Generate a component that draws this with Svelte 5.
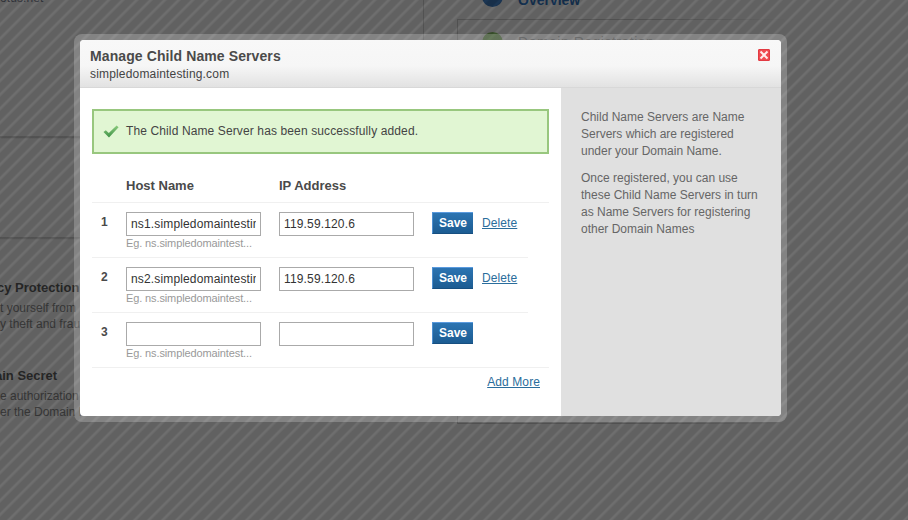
<script>
	const rows = [
		{ n: 1, host: 'ns1.simpledomaintesting.com', ip: '119.59.120.6', saved: true },
		{ n: 2, host: 'ns2.simpledomaintesting.com', ip: '119.59.120.6', saved: true },
		{ n: 3, host: '', ip: '', saved: false }
	];
</script>

<div class="page">
	<!-- the dimmed site behind the overlay -->
	<div class="behind">
		<div class="left-col">
			<p class="domain-bit">otus.net</p>
			<div class="feature first">
				<h4>cy Protection</h4>
				<p>t yourself from<br />y theft and fraud</p>
			</div>
			<div class="feature second">
				<h4>ain Secret</h4>
				<p>e authorization<br />er the Domain N</p>
			</div>
		</div>
		<div class="right-col">
			<div class="overview">
				<span class="dot blue"></span>
				<span class="ov-text">Overview</span>
			</div>
			<div class="panel">
				<span class="dot green"></span>
				<span class="panel-text">Domain Registration</span>
			</div>
		</div>
	</div>
	<div class="stripes"></div>

	<div class="modal">
		<div class="modal-inner">
			<header>
				<h2>Manage Child Name Servers</h2>
				<div class="sub">simpledomaintesting.com</div>
				<button class="close" aria-label="Close">
					<svg width="10" height="10" viewBox="0 0 10 10">
						<path d="M1.5 1.5 8.5 8.5M8.5 1.5 1.5 8.5" stroke="#ffecec" stroke-width="2" fill="none" />
					</svg>
				</button>
			</header>
			<div class="body">
				<div class="main">
					<div class="success">
						<svg width="16" height="13" viewBox="0 0 16 13">
							<defs>
								<linearGradient id="tick" x1="0" y1="0" x2="0" y2="1">
									<stop offset="0" stop-color="#8ccb7e" />
									<stop offset="1" stop-color="#3c9145" />
								</linearGradient>
							</defs>
							<path d="M0.5 7 2.8 5.2 5.8 8 13.6 0.6 15.6 2.2 6 12.6Z" fill="url(#tick)" />
						</svg>
						<span>The Child Name Server has been successfully added.</span>
					</div>
					<div class="heads">
						<span class="h-host">Host Name</span>
						<span>IP Address</span>
					</div>
					{#each rows as row}
						<div class="row">
							<span class="num">{row.n}</span>
							<div class="host">
								<input type="text" value={row.host} />
								<div class="eg">Eg. ns.simpledomaintest...</div>
							</div>
							<input class="ip" type="text" value={row.ip} />
							<button class="save">Save</button>
							{#if row.saved}
								<a href="#delete" class="link">Delete</a>
							{/if}
						</div>
					{/each}
					<div class="more"><a href="#more" class="link">Add More</a></div>
				</div>
				<aside>
					<p>Child Name Servers are Name Servers which are registered under your Domain Name.</p>
					<p>Once registered, you can use these Child Name Servers in turn as Name Servers for registering other Domain Names</p>
				</aside>
			</div>
		</div>
	</div>
</div>

<style>
	:global(body) {
		margin: 0;
	}

	.page {
		position: relative;
		width: 908px;
		height: 520px;
		overflow: hidden;
		font-family: 'Liberation Sans', Arial, sans-serif;
		background: #fff;
	}

	.behind {
		position: absolute;
		inset: 0;
		display: flex;
		align-items: flex-start;
	}

	.left-col {
		position: relative;
		width: 424px;
		height: 400px;
		flex: none;
		box-sizing: border-box;
		border-right: 1px solid #d6d6d6;
		background: linear-gradient(#fff 136px, #ececec 136px, #c4c4c4 137px, #e8e8e8 138px, #fff 139px, #fff 237px, #e4e4e4 237px, #c8c8c8 238px, #ededed 239px, #fff 240px);
	}

	.domain-bit {
		margin: 0;
		position: absolute;
		left: 0;
		top: -9px;
		font-size: 12px;
		color: #7d8294;
		letter-spacing: 0.1px;
	}

	.feature {
		position: absolute;
		left: 0;
		width: 84px;
		overflow: hidden;
		white-space: nowrap;
	}

	.first {
		top: 279px;
	}

	.second {
		top: 367px;
	}

	.feature h4 {
		margin: 0 0 4px -3px;
		font-size: 13px;
		line-height: 17px;
		color: #5e5e5e;
	}

	.second h4 {
		margin-left: -5px;
	}

	.feature p {
		margin: 0;
		font-size: 12px;
		line-height: 16px;
		color: #8a8a8a;
	}

	.right-col {
		flex: 1;
		position: relative;
	}

	.overview {
		position: absolute;
		left: 58px;
		top: -14px;
		display: flex;
		align-items: center;
		gap: 15px;
	}

	.dot {
		display: block;
		flex: none;
		width: 21px;
		height: 21px;
		border-radius: 50%;
	}

	.dot.blue {
		background: #3f7cc0;
	}

	.dot.green {
		background: #8cc66a;
	}

	.ov-text {
		font-size: 14px;
		font-weight: bold;
		color: #2f74c0;
		position: relative;
		top: 3px;
	}

	.panel {
		position: absolute;
		left: 33px;
		top: 19px;
		width: 330px;
		height: 405px;
		box-sizing: border-box;
		border: 1px solid;
		border-right: 0;
		border-image: linear-gradient(to right, #d2d2d2, #d2d2d2 60%, transparent) 1;
		padding: 12px 0 0 24px;
		display: flex;
		gap: 15px;
	}

	.panel-text {
		font-size: 14px;
		line-height: 20px;
		letter-spacing: 0.5px;
		color: #a8a8a8;
	}

	.stripes {
		position: absolute;
		inset: 0;
		background: repeating-linear-gradient(135deg, rgba(0, 0, 0, 0.62) 0 5.5px, rgba(0, 0, 0, 0.57) 7px 8px, rgba(0, 0, 0, 0.62) 9.9px);
	}

	.modal {
		position: absolute;
		left: 74px;
		top: 34px;
		width: 713px;
		height: 388px;
		box-sizing: border-box;
		padding: 6px;
		border-radius: 8px;
		background: rgba(255, 255, 255, 0.22);
	}

	.modal-inner {
		height: 100%;
		border-radius: 4px;
		overflow: hidden;
		display: flex;
		flex-direction: column;
		background: #fff;
		color: #4a4a4a;
	}

	header {
		position: relative;
		flex: none;
		height: 48px;
		box-sizing: border-box;
		padding: 7px 10px;
		background: linear-gradient(#f8f8f8 0, #f6f6f6 55%, #e2e2e2 100%);
		border-bottom: 1px solid #d8d8d8;
	}

	h2 {
		margin: 0;
		font-size: 14px;
		line-height: 18px;
		letter-spacing: 0.1px;
		color: #4a4a4a;
	}

	.sub {
		font-size: 12px;
		line-height: 16px;
		margin-top: 1px;
		letter-spacing: 0.17px;
		color: #444;
	}

	.close {
		position: absolute;
		right: 11px;
		top: 9px;
		width: 12px;
		height: 12px;
		box-sizing: border-box;
		padding: 0;
		border: 1px solid #e23a42;
		border-radius: 1px;
		background: #f04a50;
		display: block;
	}

	.close svg {
		display: block;
	}

	.body {
		flex: 1;
		display: flex;
	}

	.main {
		width: 481px;
		flex: none;
		box-sizing: border-box;
		padding: 21px 12px 0;
	}

	.success {
		height: 45px;
		box-sizing: border-box;
		border: 2px solid #98c77e;
		background: #e1f6d3;
		display: flex;
		align-items: center;
		gap: 7px;
		padding-left: 9px;
		font-size: 12px;
		letter-spacing: 0.12px;
		color: #444;
	}

	.success span {
		position: relative;
		top: -1px;
	}

	.heads {
		display: flex;
		height: 49px;
		align-items: flex-end;
		padding: 0 0 9px 34px;
		box-sizing: border-box;
		font-size: 13px;
		font-weight: bold;
		border-bottom: 1px solid #f0f0f0;
	}

	.h-host {
		width: 153px;
	}

	.row {
		display: flex;
		align-items: flex-start;
		height: 55px;
		box-sizing: border-box;
		padding-top: 9px;
		width: 436px;
		border-bottom: 1px solid #f0f0f0;
		font-size: 12px;
	}

	.row:nth-of-type(5) {
		width: 457px;
	}

	.num {
		width: 34px;
		padding: 3px 0 0 9px;
		box-sizing: border-box;
		font-weight: bold;
	}

	.host {
		width: 153px;
	}

	input {
		display: block;
		width: 135px;
		height: 24px;
		box-sizing: border-box;
		border: 1px solid #aaa;
		padding: 0 4px;
		font: 12px 'Liberation Sans', Arial, sans-serif;
		letter-spacing: 0.15px;
		color: #333;
		background: #fff;
		outline: none;
	}

	.eg {
		font-size: 11px;
		line-height: 12px;
		margin-top: 1px;
		color: #999;
		letter-spacing: -0.12px;
	}

	.save {
		margin-left: 18px;
		width: 41px;
		height: 22px;
		box-sizing: border-box;
		padding: 0;
		border: none;
		border-top: 1px solid #5a9ade;
		border-left: 1px solid #4d8fd0;
		border-bottom: 1px solid #174f80;
		background: linear-gradient(#2c74b2, #1c5c92);
		color: #fff;
		font: bold 12px 'Liberation Sans', Arial, sans-serif;
	}

	.link {
		margin-left: 9px;
		margin-top: 4px;
		font-size: 12px;
		letter-spacing: 0.1px;
		color: #2a6d9c;
		text-decoration: underline;
	}

	.more {
		text-align: right;
		padding: 7px 9px 0 0;
		font-size: 12px;
	}

	.more .link {
		margin: 0;
	}

	aside {
		flex: 1;
		background: #e0e0e0;
		padding: 21px 20px 0;
		font-size: 12px;
		line-height: 17px;
		color: #666;
	}

	aside p {
		margin: 0 0 10px;
	}
</style>
